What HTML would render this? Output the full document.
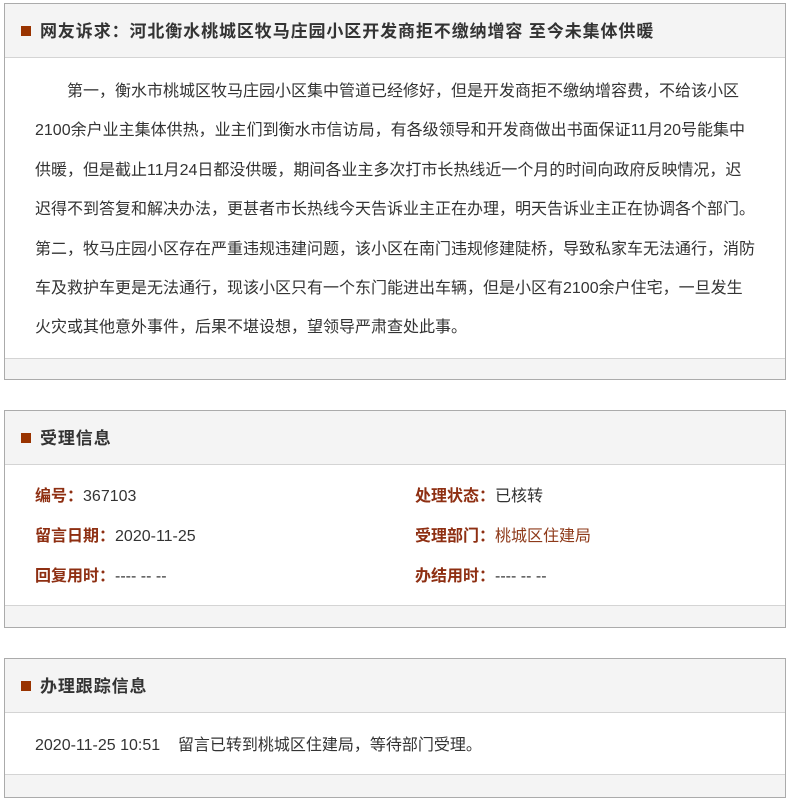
<!DOCTYPE html>
<html><head><meta charset="utf-8"><style>
*{margin:0;padding:0;box-sizing:border-box}
body{width:792px;height:780px;background:#fff;font-family:"Liberation Sans","Noto Sans CJK SC",sans-serif;color:#333;overflow:hidden;position:relative}
.box{position:absolute;left:4px;width:782px;border:1px solid #ababab;background:#f4f4f4}
.hd{height:54px;border-bottom:1px solid #d4d4d4;position:relative;font-size:17px;letter-spacing:0.9px;font-weight:bold;color:#333;line-height:56px;padding-left:35px}
.hd:before{content:"";position:absolute;left:16px;top:22px;width:10px;height:10px;background:#993300}
.bd{background:#fff;border-bottom:1px solid #d4d4d4}
.txt{padding:14px 0 10px 30px;font-size:16px;line-height:39.4px;white-space:nowrap}
.row{position:relative;height:40px;font-size:16px;line-height:40px}
.l{font-weight:bold;color:#8e2f12}
.c1{position:absolute;left:30px}
.c2{position:absolute;left:410px}
</style></head><body>
<div class="box" style="top:3px;height:377px">
<div class="hd">网友诉求：河北衡水桃城区牧马庄园小区开发商拒不缴纳增容 至今未集体供暖</div>
<div class="bd" style="height:301px"><div class="txt">&#12288;&#12288;第一，衡水市桃城区牧马庄园小区集中管道已经修好，但是开发商拒不缴纳增容费，不给该小区<br>2100余户业主集体供热，业主们到衡水市信访局，有各级领导和开发商做出书面保证11月20号能集中<br>供暖，但是截止11月24日都没供暖，期间各业主多次打市长热线近一个月的时间向政府反映情况，迟<br>迟得不到答复和解决办法，更甚者市长热线今天告诉业主正在办理，明天告诉业主正在协调各个部门。<br>第二，牧马庄园小区存在严重违规违建问题，该小区在南门违规修建陡桥，导致私家车无法通行，消防<br>车及救护车更是无法通行，现该小区只有一个东门能进出车辆，但是小区有2100余户住宅，一旦发生<br>火灾或其他意外事件，后果不堪设想，望领导严肃查处此事。</div></div>
</div>
<div class="box" style="top:410px;height:218px">
<div class="hd">受理信息</div>
<div class="bd" style="height:141px;padding-top:12px">
<div class="row"><span class="c1"><span class="l">编号：</span>367103</span><span class="c2"><span class="l">处理状态：</span>已核转</span></div>
<div class="row"><span class="c1"><span class="l">留言日期：</span>2020-11-25</span><span class="c2"><span class="l">受理部门：</span><span style="color:#8e3a1a">桃城区住建局</span></span></div>
<div class="row"><span class="c1"><span class="l">回复用时：</span>---- -- --</span><span class="c2"><span class="l">办结用时：</span>---- -- --</span></div>
</div>
</div>
<div class="box" style="top:658px;height:140px">
<div class="hd">办理跟踪信息</div>
<div class="bd" style="height:62px">
<div class="row" style="top:13px"><span class="c1">2020-11-25 10:51&nbsp;&nbsp;&nbsp;&nbsp;留言已转到桃城区住建局，等待部门受理。</span></div>
</div>
</div>
</body></html>
